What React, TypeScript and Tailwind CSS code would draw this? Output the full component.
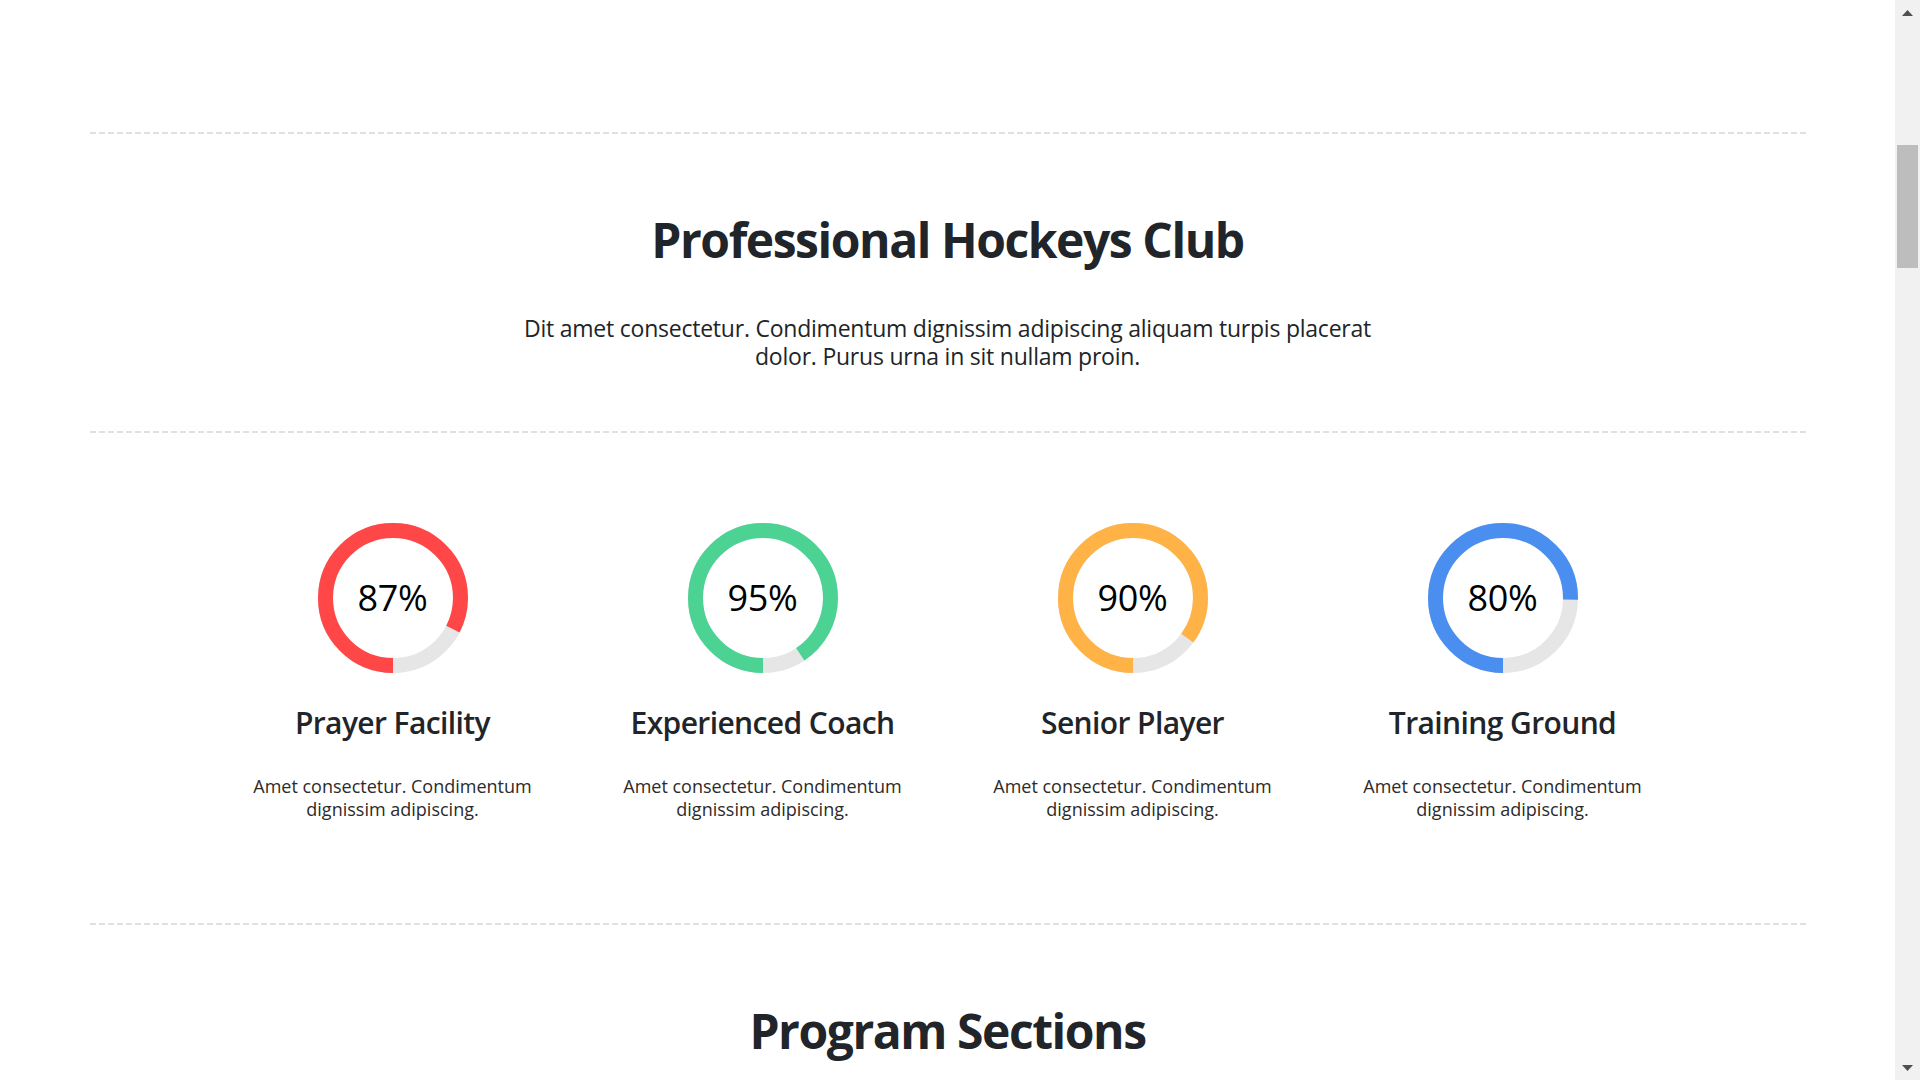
import React from "react";

type Item = { label: string; sweep: number; color: string; title: string };

const items: Item[] = [
  { label: "87%", sweep: 297, color: "#ff4747", title: "Prayer Facility" },
  { label: "95%", sweep: 326, color: "#4cd394", title: "Experienced Coach" },
  { label: "90%", sweep: 306, color: "#ffb347", title: "Senior Player" },
  { label: "80%", sweep: 271, color: "#4a8ff0", title: "Training Ground" },
];

function Ring({ label, sweep, color }: { label: string; sweep: number; color: string }) {
  const r = 67.5;
  const c = 2 * Math.PI * r;
  const len = (c * sweep) / 360;
  return (
    <div className="relative flex h-[150px] w-[150px] items-center justify-center">
      <svg className="absolute inset-0" width="150" height="150" viewBox="0 0 150 150">
        <circle cx="75" cy="75" r={r} fill="none" stroke="#e6e6e6" strokeWidth="15" />
        <circle
          cx="75"
          cy="75"
          r={r}
          fill="none"
          stroke={color}
          strokeWidth="15"
          strokeDasharray={`${len} ${c}`}
          transform="rotate(90 75 75)"
        />
      </svg>
      <span className="relative text-[36px] leading-none text-black tracking-[-0.01em]">{label}</span>
    </div>
  );
}

function Dashed() {
  return (
    <div className="h-[2px] w-full bg-[linear-gradient(to_right,#e0e0e0_6px,transparent_6px)] bg-[length:9px_2px]" />
  );
}

function Scrollbar() {
  return (
    <div className="flex h-full w-[25px] shrink-0 flex-col items-center bg-[#f1f1f1]">
      <div className="flex h-[25px] w-full items-center justify-center">
        <svg width="11" height="6" viewBox="0 0 11 6">
          <polygon points="5.5,0 11,6 0,6" fill="#505050" />
        </svg>
      </div>
      <div className="mt-[120px] h-[123px] w-[21px] bg-[#bdbdbd]" />
      <div className="flex-1" />
      <div className="flex h-[25px] w-full items-center justify-center">
        <svg width="11" height="6" viewBox="0 0 11 6">
          <polygon points="0,0 11,0 5.5,6" fill="#505050" />
        </svg>
      </div>
    </div>
  );
}

export default function App() {
  return (
    <div className="flex h-screen w-full overflow-hidden bg-white font-['Open_Sans',sans-serif]">
      <main className="min-w-0 flex-1 pt-[132px]">
        <div className="mx-auto w-[1716px]">
          <Dashed />
          <h2 className="mt-[77px] text-center text-[48px] font-bold leading-[1.2] tracking-[-0.03em] text-[#212529]">
            Professional Hockeys Club
          </h2>
          <div className="mt-[45px] flex flex-col items-center text-[23px] leading-[28px] tracking-[-0.01em] text-[#212529]">
            <p>Dit amet consectetur. Condimentum dignissim adipiscing aliquam turpis placerat</p>
            <p>dolor. Purus urna in sit nullam proin.</p>
          </div>
          <div className="mt-[61px]">
            <Dashed />
          </div>
          <div className="mx-auto mt-[90px] grid w-[1480px] grid-cols-4">
            {items.map((it) => (
              <div key={it.title} className="flex flex-col items-center">
                <Ring label={it.label} sweep={it.sweep} color={it.color} />
                <h3 className="mt-[32px] text-center text-[30px] font-semibold leading-[1.2] tracking-[-0.02em] text-[#212529]">
                  {it.title}
                </h3>
                <div className="mt-[34px] flex flex-col items-center text-[18px] leading-[23px] text-[#2b2b2b]">
                  <p>Amet consectetur. Condimentum</p>
                  <p>dignissim adipiscing.</p>
                </div>
              </div>
            ))}
          </div>
          <div className="mt-[102px]">
            <Dashed />
          </div>
          <h2 className="mt-[77px] text-center text-[48px] font-bold leading-[1.2] tracking-[-0.03em] text-[#212529]">
            Program Sections
          </h2>
        </div>
      </main>
      <Scrollbar />
    </div>
  );
}
